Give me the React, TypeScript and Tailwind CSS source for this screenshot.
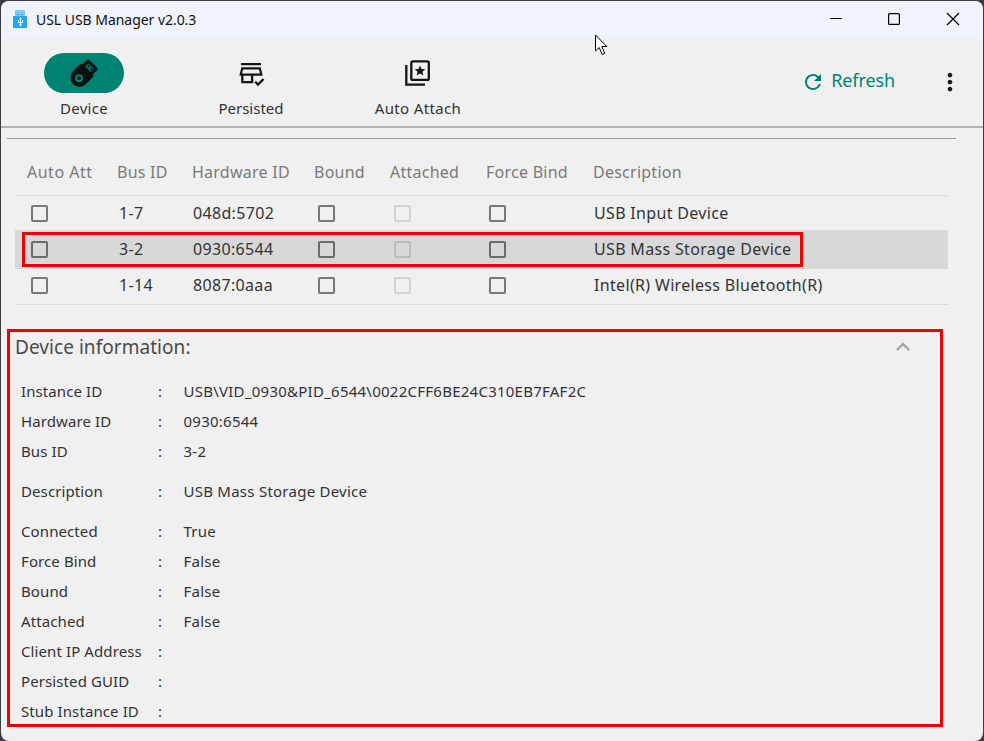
import type { ReactNode } from "react";
import { MdRefresh, MdMoreVert, MdExpandLess } from "react-icons/md";

function AppIcon() {
  return (
    <svg className="h-[19px] w-[15px]" viewBox="0 0 15 19">
      <path d="M2 0h10v6H2z" fill="#7cc7fb" />
      <path d="M4 4h2v1H4zM8 4h2v1H8z" fill="#3f9fe0" />
      <path d="M0 6h14v12H0z" fill="#27a5f5" />
      <path d="M7.5 8v8M5.5 10v2.5h4V10" fill="none" stroke="#fff" strokeWidth="1" />
      <path d="M7.5 7.2l1.2 1.6H6.3zM6.5 14.6h2v1.4h-2z" fill="#fff" />
    </svg>
  );
}

function UsbIcon() {
  return (
    <svg className="size-7" viewBox="0 0 28 28">
      <path d="M12 7L18.3 .8 27.4 10 21.2 16.2z" fill="#07110f" stroke="#07110f" strokeWidth="1.2" strokeLinejoin="round" />
      <path
        d="M2.6 12.8L10.2 5.2Q11.4 4 12.7 5.2L23 15.5Q24.200 16.7 23 17.9L15.4 25.4A9 9 0 0 1 2.6 12.8z"
        fill="#07110f"
      />
      <path d="M15.2 7.4L18.3 4.3 24 10 20.9 13.1z" fill="#008272" />
      <path d="M17 7l1.4-1.4 1.7 1.7-1.4 1.4zM20 10l1.4-1.4 1.7 1.7-1.4 1.4z" fill="#07110f" />
      <circle cx="9" cy="19.2" r="2.9" fill="none" stroke="#008272" strokeWidth="2" />
    </svg>
  );
}

function StoreCheckIcon() {
  return (
    <svg className="size-[26px] overflow-visible" viewBox="0 0 26 26" fill="none" stroke="#141414">
      <path d="M3 4.2h20" strokeWidth="2.3" />
      <path d="M4.2 8.4h17.6l1.5 6.2H2.7z" strokeWidth="2.2" />
      <path d="M4.3 14.6v7.6h9.8v-7.6" strokeWidth="2.3" />
      <path d="M17.2 21.8l2.8 2.8 5.6-5.6" strokeWidth="2.3" />
    </svg>
  );
}

function StarStackIcon() {
  return (
    <svg className="size-[26px]" viewBox="0 0 26 26" fill="none" stroke="#141414" strokeWidth="2.3">
      <rect x="6.3" y="1.3" width="17.5" height="18.6" rx="1.5" />
      <path d="M1.3 5v19.7H20" />
      <path
        d="M15 5.4l1.5 3.6 3.8.3-2.9 2.5.9 3.7-3.3-2-3.3 2 .9-3.7-2.9-2.5 3.8-.3z"
        fill="#141414"
        stroke="none"
      />
    </svg>
  );
}

function Tab({ icon, label, tracking, active }: { icon: ReactNode; label: string; tracking: string; active?: boolean }) {
  return (
    <div className="flex w-[167px] flex-col items-center">
      <div className={`mr-0.5 flex h-10 w-20 items-center justify-center rounded-full ${active ? "bg-[#008272]" : ""}`}>
        {icon}
      </div>
      <span className={`mr-px mt-[3px] text-[15px] leading-6 text-[#333] ${tracking}`}>{label}</span>
    </div>
  );
}

function Box({ faded }: { faded?: boolean }) {
  return (
    <div
      className={`size-[17px] rounded-[2px] border-2 ${faded ? "border-black/12" : "border-black/50"}`}
    />
  );
}

const cols = "grid grid-cols-[90px_75px_122px_76px_95px_108px_1fr] pl-3";

function Row({ bus, hw, desc, size }: { bus: string; hw: string; desc: string; size: string }) {
  return (
    <div className={`${cols} items-center border-b text-[16px] tracking-[0.33px] text-[#333] ${size}`}>
      <div className="pl-1"><Box /></div>
      <div className="pl-0.5">{bus}</div>
      <div className="pl-px">{hw}</div>
      <div className="pl-1"><Box /></div>
      <div className="pl-1"><Box faded /></div>
      <div className="pl-1"><Box /></div>
      <div className="pl-px">{desc}</div>
    </div>
  );
}

const info: [string, string, string][] = [
  ["Instance ID", "USB\\VID_0930&PID_6544\\0022CFF6BE24C310EB7FAF2C", "h-[30px]"],
  ["Hardware ID", "0930:6544", "h-[30px]"],
  ["Bus ID", "3-2", "h-[30px]"],
  ["Description", "USB Mass Storage Device", "h-[50px]"],
  ["Connected", "True", "h-[30px]"],
  ["Force Bind", "False", "h-[30px]"],
  ["Bound", "False", "h-[30px]"],
  ["Attached", "False", "h-[30px]"],
  ["Client IP Address", "", "h-[30px]"],
  ["Persisted GUID", "", "h-[30px]"],
  ["Stub Instance ID", "", "h-[30px]"],
];

export default function App() {
  return (
    <div className="h-[741px] w-[984px] overflow-hidden bg-[#3c3c44] pl-px pt-px font-['Noto_Sans',sans-serif]">
      <div className="relative flex h-[740px] w-[982px] flex-col overflow-hidden rounded-[8px] bg-[#f0f0f0]">
        <div className="flex h-[37px] shrink-0 items-center bg-[#eff3fb] pl-3">
          <AppIcon />
          <span className="ml-2 flex-1 text-[14px] tracking-[-0.04px] text-[#111]">USL USB Manager v2.0.3</span>
          <svg className="mb-px mr-[22px] h-3.5 w-[132px]" viewBox="0 0 132 14" fill="none" stroke="#000" strokeWidth="1.2">
            <path d="M1 6.5h12" />
            <rect x="59.6" y="1.6" width="10.8" height="10.8" rx="1" />
            <path d="M118 1l12 12M130 1l-12 12" />
          </svg>
        </div>

        <div className="flex h-[90px] shrink-0 border-b-2 border-[#b4b4b4] pt-[15px]">
          <Tab active icon={<UsbIcon />} label="Device" tracking="tracking-[0.3px]" />
          <Tab icon={<StoreCheckIcon />} label="Persisted" tracking="tracking-normal" />
          <Tab icon={<StarStackIcon />} label="Auto Attach" tracking="tracking-[0.35px]" />
          <div className="ml-auto flex h-14 items-center text-[#008272]">
            <MdRefresh className="mr-[6px] mt-0.5 size-6" />
            <span className="mb-0.5 text-[18px] tracking-[-0.1px]">Refresh</span>
            <MdMoreVert className="ml-[41px] mr-[19px] mt-0.5 size-7 text-[#1a1a1a]" />
          </div>
        </div>

        <div className="ml-1.5 mt-[10px] h-px w-[949px] shrink-0 bg-[#9c9c9c]" />

        <div className="ml-3.5 mt-[10px] w-[933px]">
          <div className={`${cols} h-[47px] items-center border-b border-[#dcdcdc] text-[16px] tracking-[0.25px] text-[#7a7a7a]`}>
            <div className="tracking-[0.5px]">Auto Att</div>
            <div>Bus ID</div>
            <div>Hardware ID</div>
            <div>Bound</div>
            <div>Attached</div>
            <div className="pl-px">Force Bind</div>
            <div>Description</div>
          </div>
          <Row bus="1-7" hw="048d:5702" desc="USB Input Device" size="h-[35px] border-[#dcdcdc]" />
          <Row
            bus="3-2"
            hw="0930:6544"
            desc="USB Mass Storage Device"
            size="h-[38px] border-[#d8d8d8] bg-[#d8d8d8] pb-px"
          />
          <Row bus="1-14" hw="8087:0aaa" desc="Intel(R) Wireless Bluetooth(R)" size="h-9 border-[#dcdcdc] pb-[3px]" />
        </div>

        <div className="ml-1.5 mt-[24px] h-[398px] w-[936px] shrink-0 border-[3px] border-[#ec0000]">
          <div className="flex h-[30px] items-center justify-between pl-[5px] pr-[25px] text-[19px] tracking-[0.05px] text-[#4a4a4a]">
            <span>Device information:</span>
            <MdExpandLess className="-mr-0.5 size-7 text-[#a8a8a8]" />
          </div>
          <div className="mt-[14px] pl-[11px] text-[15px] tracking-[0.1px] text-[#333]">
            {info.map(([label, value, height]) => (
              <div key={label} className={`flex items-center ${height}`}>
                <span className="w-[137px]">{label}</span>
                <span className="w-[25.5px]">:</span>
                <span className="tracking-[0.25px]">{value}</span>
              </div>
            ))}
          </div>
        </div>

        <div className="absolute left-[21px] top-[231px] h-[35px] w-[781px] border-[3px] border-[#ec0000]" />
        <svg className="absolute left-[594px] top-[33px] h-[22px] w-[14px]" viewBox="0 0 14 22">
          <path
            d="M.5 1v16l3.7-3.5 3 7 2.6-1.1-3-6.9h5z"
            fill="#fff"
            stroke="#000"
          />
        </svg>
      </div>
    </div>
  );
}
